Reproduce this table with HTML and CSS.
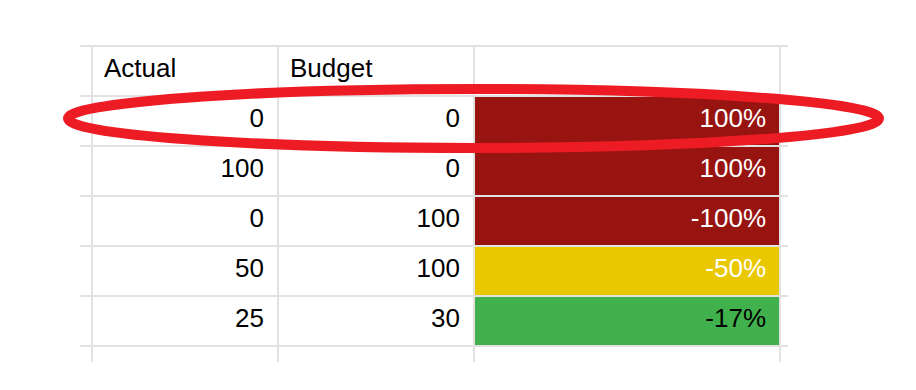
FILE: index.html
```html
<!DOCTYPE html>
<html lang="en">
<head>
<meta charset="utf-8">
<title>Actual vs Budget</title>
<link rel="stylesheet" href="styles.css">
</head>
<body>
<div class="page">
  <div class="sheet">
    <div class="cell edge"></div>
    <div class="cell head">Actual</div>
    <div class="cell head">Budget</div>
    <div class="cell head"></div>
    <div class="cell edge"></div>

    <div class="cell edge"></div>
    <div class="cell num">0</div>
    <div class="cell num">0</div>
    <div class="cell num pct red">100%</div>
    <div class="cell edge"></div>

    <div class="cell edge"></div>
    <div class="cell num">100</div>
    <div class="cell num">0</div>
    <div class="cell num pct red">100%</div>
    <div class="cell edge"></div>

    <div class="cell edge"></div>
    <div class="cell num">0</div>
    <div class="cell num">100</div>
    <div class="cell num pct red">-100%</div>
    <div class="cell edge"></div>

    <div class="cell edge"></div>
    <div class="cell num">50</div>
    <div class="cell num">100</div>
    <div class="cell num pct yellow">-50%</div>
    <div class="cell edge"></div>

    <div class="cell edge"></div>
    <div class="cell num">25</div>
    <div class="cell num">30</div>
    <div class="cell num pct green">-17%</div>
    <div class="cell edge"></div>

    <div class="cell edge stub"></div>
    <div class="cell stub"></div>
    <div class="cell stub"></div>
    <div class="cell stub"></div>
    <div class="cell edge stub"></div>
  </div>
  <svg class="mark" width="916" height="390" viewBox="0 0 916 390" aria-hidden="true">
    <ellipse cx="473.5" cy="118.5" rx="405.5" ry="29.5" fill="none" stroke="#ed1c24" stroke-width="10"/>
  </svg>
</div>
</body>
</html>
```
FILE: styles.css
```css
html, body {
  margin: 0;
  padding: 0;
  background: #ffffff;
}

.page {
  position: relative;
  width: 916px;
  height: 390px;
  overflow: hidden;
  padding-top: 45px;
  padding-left: 80px;
  box-sizing: border-box;
}

.sheet {
  display: grid;
  grid-template-columns: 11px 184px 194px 304px 7px;
  grid-template-rows: 48px 48px 48px 48px 48px 48px 15px;
  gap: 2px;
  width: max-content;
  background: #e2e2e2;
  border-top: 2px solid #e2e2e2;
  font-family: "Liberation Sans", Arial, sans-serif;
  font-size: 26px;
  line-height: 30px;
  color: #000000;
}

.cell {
  background: #ffffff;
  display: flex;
  align-items: flex-end;
  padding: 0 13px 12px 11px;
  box-sizing: border-box;
  white-space: nowrap;
}

.edge {
  padding: 0;
}

.stub {
  padding: 0;
}

.num {
  justify-content: flex-end;
}

.red {
  background: #981411;
  color: #ffffff;
}

.yellow {
  background: #eac800;
  color: #ffffff;
}

.green {
  background: #40b14c;
  color: #000000;
}

.mark {
  position: absolute;
  left: 0;
  top: 0;
  pointer-events: none;
}
```
